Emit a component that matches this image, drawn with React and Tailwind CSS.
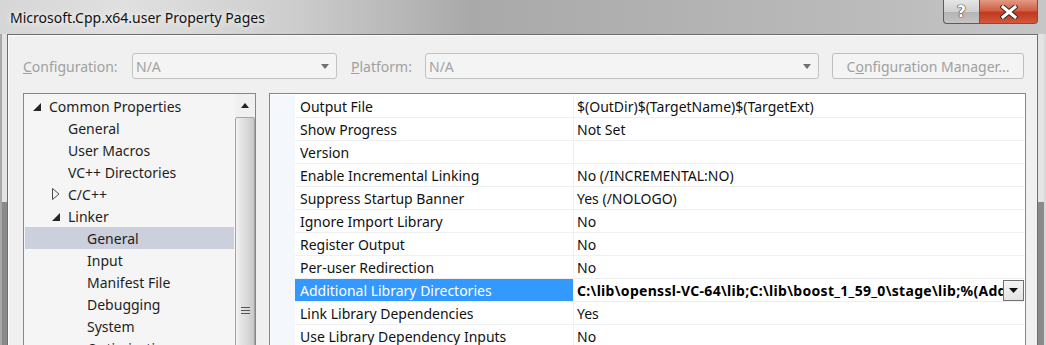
import React from "react";

const treeRows = [
  { label: "Common Properties", level: 0, arrow: "open" },
  { label: "General", level: 1 },
  { label: "User Macros", level: 1 },
  { label: "VC++ Directories", level: 1 },
  { label: "C/C++", level: 1, arrow: "closed" },
  { label: "Linker", level: 1, arrow: "open" },
  { label: "General", level: 2, selected: true },
  { label: "Input", level: 2 },
  { label: "Manifest File", level: 2 },
  { label: "Debugging", level: 2 },
  { label: "System", level: 2 },
  { label: "Optimization", level: 2 },
];

const indent = ["w-[24px]", "w-[43px]", "w-[62px]"];

const props = [
  ["Output File", "$(OutDir)$(TargetName)$(TargetExt)"],
  ["Show Progress", "Not Set"],
  ["Version", ""],
  ["Enable Incremental Linking", "No (/INCREMENTAL:NO)"],
  ["Suppress Startup Banner", "Yes (/NOLOGO)"],
  ["Ignore Import Library", "No"],
  ["Register Output", "No"],
  ["Per-user Redirection", "No"],
  ["Additional Library Directories", "C:\\lib\\openssl-VC-64\\lib;C:\\lib\\boost_1_59_0\\stage\\lib;%(AdditionalLibraryDirectories)", true],
  ["Link Library Dependencies", "Yes"],
  ["Use Library Dependency Inputs", "No"],
];

function ComboArrow() {
  return (
    <svg width="8" height="5" viewBox="0 0 8 5">
      <path d="M0 0 L8 0 L4 5 Z" fill="#707070" />
    </svg>
  );
}

function Combo({ width }) {
  return (
    <div className={`${width} h-[26px] flex items-center border border-[#c3c3c3] rounded-[3px] bg-[#f4f4f4] pl-[3px] pr-[7px]`}>
      <span className="flex-1 text-[#a3a3a3]">N/A</span>
      <ComboArrow />
    </div>
  );
}

function TreeArrow({ kind }) {
  if (kind === "open")
    return (
      <svg width="8" height="8" viewBox="0 0 8 8" className="mt-[2px]">
        <path d="M8 0 L8 8 L0 8 Z" fill="#262626" />
      </svg>
    );
  return (
    <svg width="8" height="12" viewBox="0 0 8 12">
      <path d="M0.5 0.5 L7 6 L0.5 11.5 Z" fill="none" stroke="#4a4a4a" />
    </svg>
  );
}

export default function App() {
  return (
    <div className="w-[1046px] h-[345px] overflow-hidden flex flex-col font-['Noto_Sans',sans-serif] text-[14px] bg-[linear-gradient(90deg,#d6d6d6_0%,#e0e0e0_12%,#cdcdcd_28%,#a9a9a9_45%,#b2b2b2_65%,#bcbcbc_85%,#c6c6c6_100%)]">
      {/* title bar */}
      <div className="h-[34px] flex items-start shrink-0">
        <div className="pl-[10px] pt-[7px] text-[14px] text-[#111] [text-shadow:0_0_8px_#f2f2f2,0_0_4px_#f2f2f2]">
          Microsoft.Cpp.x64.user Property Pages
        </div>
        <div className="ml-auto mr-[8px] flex h-[24px]">
          <div className="w-[36px] h-full flex items-center justify-center border border-t-0 border-r-0 border-[#5b5b5b] rounded-bl-[4px] bg-[linear-gradient(180deg,#e6e6e6_0%,#cfcfcf_50%,#b4b4b4_51%,#c4c4c4_100%)]">
            <span className="font-['DejaVu_Sans',sans-serif] font-bold text-[16px] leading-none text-white [text-shadow:0_0_1px_#333,0_0_1px_#333,0_0_1px_#333]">?</span>
          </div>
          <div className="w-[59px] h-full flex items-center justify-center border border-t-0 border-[#5b5b5b] rounded-br-[4px] bg-[linear-gradient(180deg,#e49a83_0%,#d06045_45%,#c0381f_55%,#d4583d_100%)]">
            <svg width="18" height="14" viewBox="0 0 18 14">
              <path d="M3 2 L15 12 M15 2 L3 12" stroke="#3a2a26" strokeWidth="5" strokeLinecap="square" />
              <path d="M3 2 L15 12 M15 2 L3 12" stroke="#ffffff" strokeWidth="3" strokeLinecap="square" />
            </svg>
          </div>
        </div>
      </div>

      <div className="flex flex-1 min-h-0">
        {/* left frame */}
        <div className="w-[7px] flex shrink-0">
          <div className="w-[2px] bg-[#a8a8a8]" />
          <div className="flex-1 flex flex-col">
            <div className="h-[168px] bg-[#e3e3e3]" />
            <div className="flex-1 bg-[#8a8a8a]" />
          </div>
        </div>

        {/* client area */}
        <div className="flex-1 min-w-0 border border-b-0 border-[#6e6e6e] bg-[#f0f0f0] shadow-[inset_1px_1px_0_#fbfbfb] pl-[15px] pt-[18px] flex flex-col">
          <div className="flex items-center h-[26px]">
            <div className="w-[109px] text-[#a0a0a0]"><u>C</u>onfiguration:</div>
            <Combo width="w-[205px]" />
            <div className="w-[88px] pl-[14px] text-[#a0a0a0]"><u>P</u>latform:</div>
            <Combo width="w-[394px]" />
            <div className="ml-[13px] w-[192px] h-[26px] flex items-center justify-center border border-[#bebebe] rounded-[3px] bg-[#f4f4f4] text-[#a0a0a0]">
              C<u>o</u>nfiguration Manager...
            </div>
          </div>

          <div className="flex mt-[14px] flex-1 min-h-0">
            {/* tree */}
            <div className="w-[233px] border border-b-0 border-[#828790] bg-[#f5f5f5] flex overflow-hidden">
              <div className="flex-1 pt-[1px]">
                {treeRows.map((r, i) => (
                  <div key={i} className={`mx-[1px] h-[22px] flex items-center text-[#1e1e1e] ${r.selected ? "bg-[#cccfdc]" : ""}`}>
                    <span className={`${indent[r.level]} flex justify-end pr-[8px] shrink-0`}>
                      {r.arrow && <TreeArrow kind={r.arrow} />}
                    </span>
                    <span className="whitespace-nowrap">{r.label}</span>
                  </div>
                ))}
              </div>
              <div className="w-[20px] flex flex-col bg-[#f0f0f0] shrink-0">
                <div className="h-[23px] flex items-center justify-center shrink-0">
                  <svg width="8" height="5" viewBox="0 0 8 5">
                    <path d="M0 5 L8 5 L4 0 Z" fill="#222" />
                  </svg>
                </div>
                <div className="h-[400px] shrink-0 border border-[#a5a5a5] rounded-[2px] bg-[linear-gradient(90deg,#f2f2f2_0%,#e4e4e4_30%,#d6d6d6_70%,#c8c8c8_100%)] flex flex-col items-center">
                  <div className="mt-[189px] flex flex-col gap-[2px]">
                    <div className="w-[9px] h-[1px] bg-[#555]" />
                    <div className="w-[9px] h-[1px] bg-[#555]" />
                    <div className="w-[9px] h-[1px] bg-[#555]" />
                  </div>
                </div>
              </div>
            </div>

            {/* property grid */}
            <div className="ml-[13px] w-[757px] border border-b-0 border-[#828790] bg-white pt-[1px] overflow-hidden">
              {props.map(([name, value, sel], i) => (
                <div key={i} className="flex h-[23px]">
                  <div className="w-[25px] bg-[#f4f7fc] shrink-0" />
                  <div className={`w-[279px] shrink-0 border-b border-r border-[#eef0f3] pl-[5px] flex items-center whitespace-nowrap ${sel ? "bg-[#3399ff] text-white" : "text-[#111]"}`}>
                    {name}
                  </div>
                  <div className="flex-1 min-w-0 border-b border-[#eef0f3] flex items-center">
                    <span className={`flex-1 min-w-0 overflow-hidden whitespace-nowrap pl-[3px] ${sel ? "font-bold text-black tracking-[0.3px]" : "text-[#111]"}`}>
                      {value}
                    </span>
                    {sel && (
                      <div className="w-[21px] h-[21px] mr-[1px] shrink-0 border border-[#707070] bg-[linear-gradient(180deg,#f4f4f4_0%,#e4e4e4_100%)] flex items-center justify-center">
                        <svg width="9" height="5" viewBox="0 0 9 5">
                          <path d="M0 0 L9 0 L4.5 5 Z" fill="#111" />
                        </svg>
                      </div>
                    )}
                  </div>
                </div>
              ))}
            </div>
          </div>
        </div>

        {/* right frame */}
        <div className="w-[8px] flex shrink-0">
          <div className="flex-1 flex flex-col">
            <div className="h-[168px] bg-[#e3e3e3]" />
            <div className="flex-1 bg-[#8a8a8a]" />
          </div>
          <div className="w-[2px] bg-[#d8d8d8]" />
        </div>
      </div>
    </div>
  );
}
